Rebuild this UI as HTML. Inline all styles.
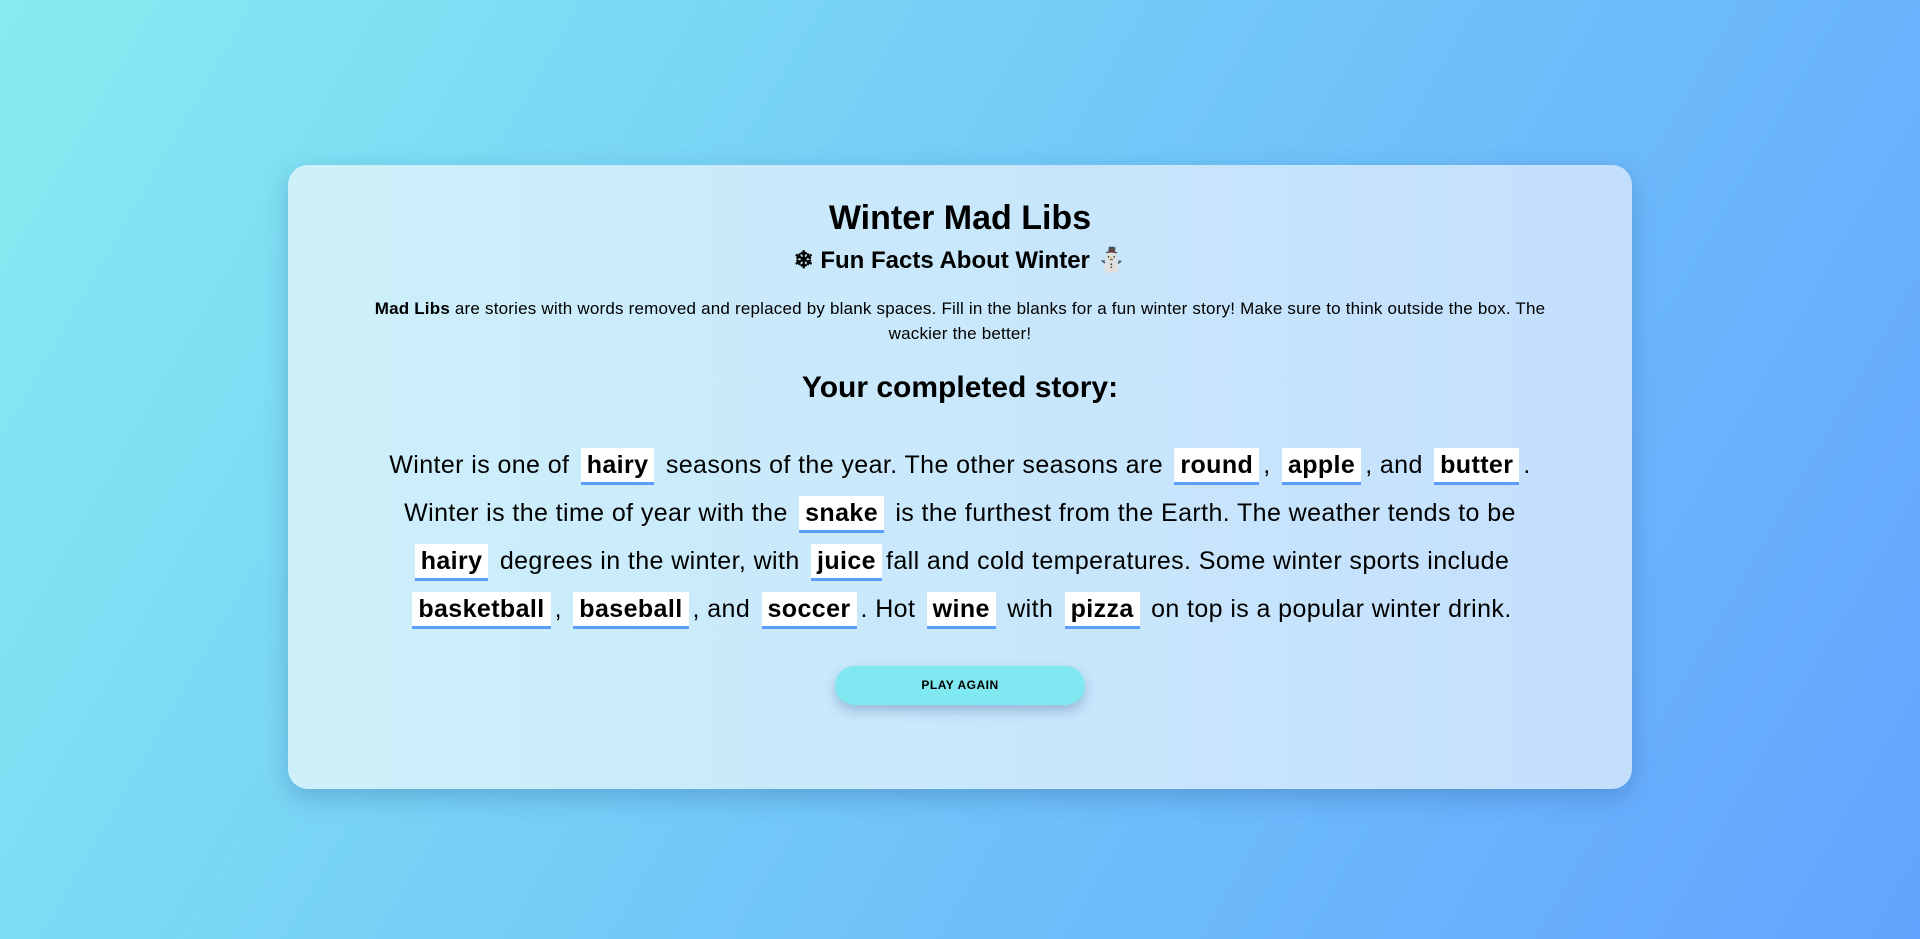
<!DOCTYPE html>
<html><head><meta charset="utf-8"><style>
html,body{margin:0;padding:0;width:1920px;height:939px;overflow:hidden}
body{background:linear-gradient(120deg,#86ecf0 0%,#72c8f8 50%,#63a3ff 100%);font-family:"Liberation Sans",sans-serif;color:#000;position:relative;text-align:center}
.card{position:absolute;left:288px;top:165px;width:1344px;height:624px;border-radius:20px;background:linear-gradient(90deg,#cdf0fa,#c4dffc);box-shadow:0 8px 24px rgba(40,80,140,.3)}
h1{position:absolute;left:0;right:0;top:198px;margin:0;font-size:34px;line-height:40px;font-weight:bold}
h2{position:absolute;left:0;right:0;top:246px;margin:0;font-size:24px;line-height:30px;font-weight:bold}
.p{position:absolute;left:0;right:0;top:296px;font-size:17px;line-height:25px;letter-spacing:.2px}
h3{position:absolute;left:0;right:0;top:370px;margin:0;font-size:30px;line-height:36px;font-weight:bold}
.story{position:absolute;left:0;right:0;top:441px;font-size:25px;line-height:48px;letter-spacing:.4px}
.b{display:inline-block;background:#fff;border-bottom:3px solid #5d9cff;font-weight:bold;padding:0 6px;line-height:34px;margin:0 4px}
.btn{position:absolute;left:835px;top:666px;width:250px;height:39px;border-radius:20px;background:#80e8f0;box-shadow:0 6px 12px rgba(40,80,140,.3);font-size:12px;font-weight:bold;line-height:39px;text-align:center;letter-spacing:.5px}
</style></head><body>
<div class="card"></div>
<h1>Winter Mad Libs</h1>
<h2>❄ Fun Facts About Winter ⛄</h2>
<div class="p"><b>Mad Libs</b> are stories with words removed and replaced by blank spaces. Fill in the blanks for a fun winter story! Make sure to think outside the box. The<br>wackier the better!</div>
<h3>Your completed story:</h3>
<div class="story">Winter is one of <span class="b">hairy</span> seasons of the year. The other seasons are <span class="b">round</span>, <span class="b">apple</span>, and <span class="b">butter</span>.<br>Winter is the time of year with the <span class="b">snake</span> is the furthest from the Earth. The weather tends to be<br><span class="b">hairy</span> degrees in the winter, with <span class="b">juice</span>fall and cold temperatures. Some winter sports include<br><span class="b">basketball</span>, <span class="b">baseball</span>, and <span class="b">soccer</span>. Hot <span class="b">wine</span> with <span class="b">pizza</span> on top is a popular winter drink.</div>
<div class="btn">PLAY AGAIN</div>
</body></html>
